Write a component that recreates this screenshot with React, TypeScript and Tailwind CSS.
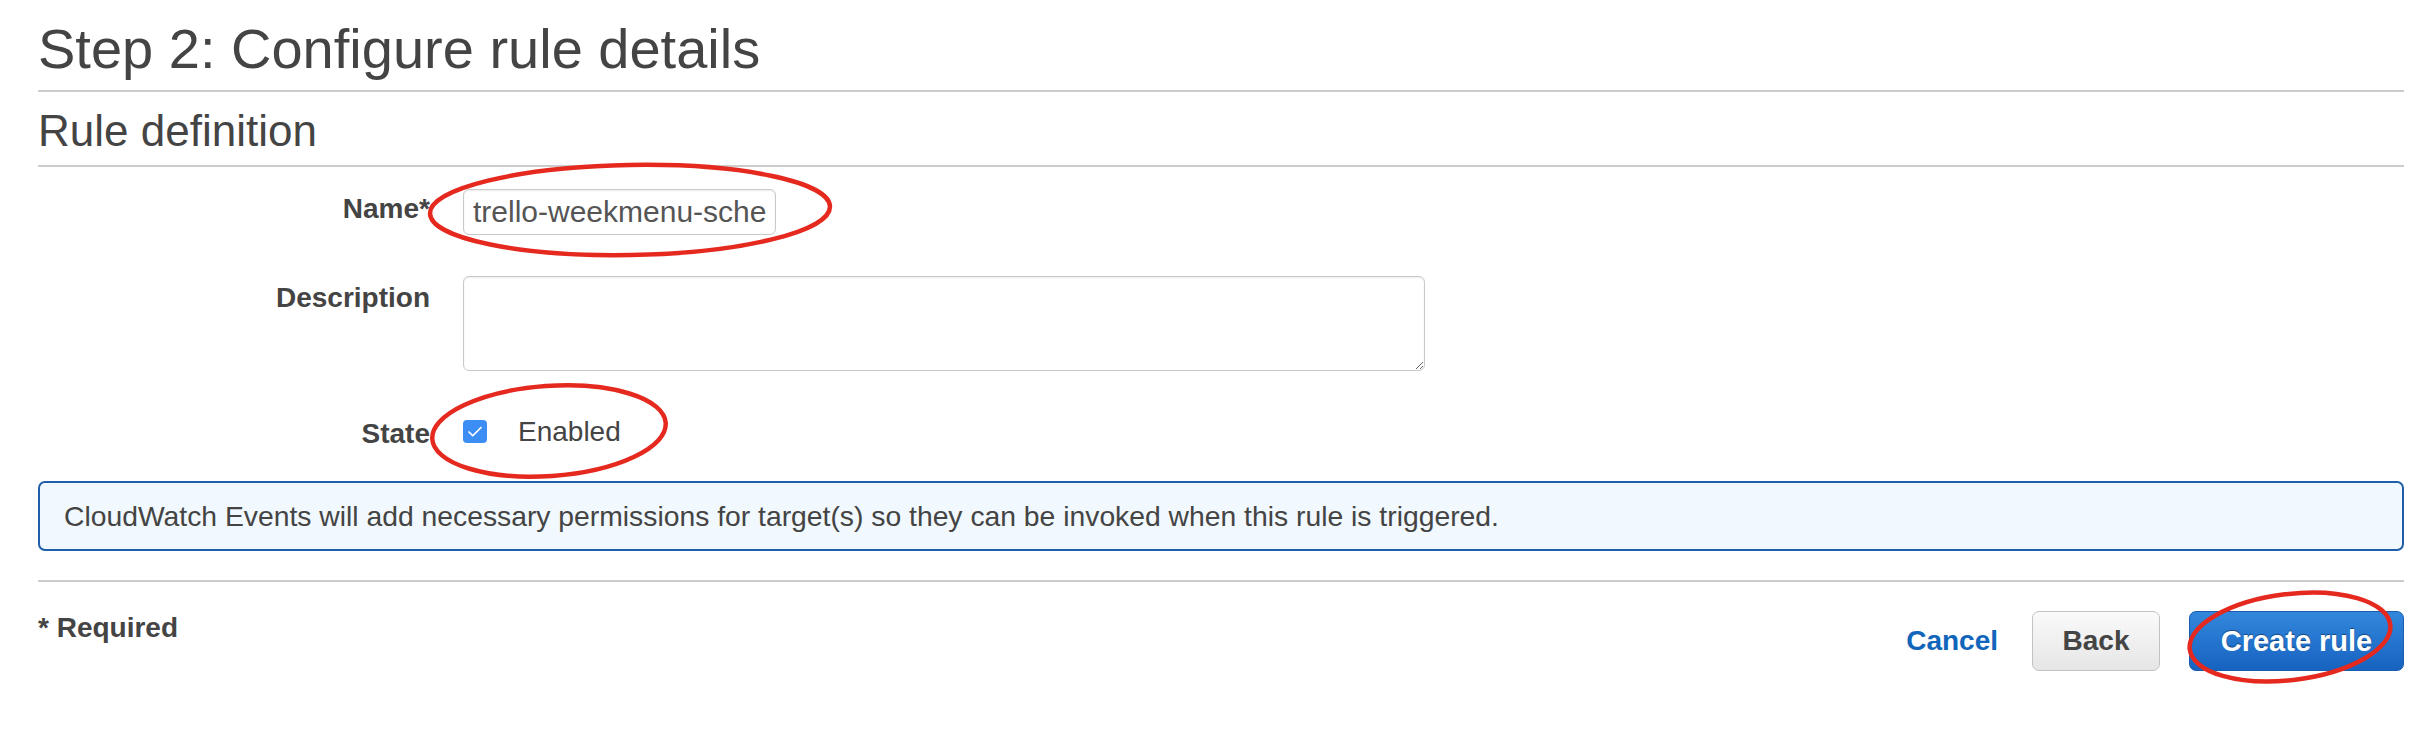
import { Check } from "lucide-react";

function Annotations() {
  // red hand-drawn circles on top of the form
  return (
    <svg
      className="pointer-events-none absolute left-0 top-0"
      width="2428"
      height="734"
      viewBox="0 0 2428 734"
      fill="none"
    >
      <ellipse cx="630" cy="210" rx="200" ry="45" stroke="#e5291f" strokeWidth="4.5" transform="rotate(-1 630 210)" />
      <ellipse cx="549" cy="431" rx="117" ry="45" stroke="#e5291f" strokeWidth="4.5" transform="rotate(-4 549 431)" />
      <ellipse cx="2290" cy="637" rx="101" ry="43" stroke="#e5291f" strokeWidth="4.5" transform="rotate(-7 2290 637)" />
    </svg>
  );
}

function Label({ text, className }: { text: string; className?: string }) {
  return (
    <div className={"w-[392px] shrink-0 text-right text-[28px] font-bold leading-none text-[#444] " + (className ?? "")}>
      {text}
    </div>
  );
}

export default function App() {
  return (
    <div
      className="relative h-[734px] w-full overflow-hidden bg-white pl-[38px] pr-[24px] pt-[21px] text-[#444]"
      style={{ fontFamily: '"Liberation Sans", Arial, sans-serif' }}
    >
      <h1 className="border-b-2 border-[#cccccc] pb-[13px] text-[56px] font-normal leading-none text-[#444]">
        Step 2: Configure rule details
      </h1>
      <h2 className="mt-[17px] border-b-2 border-[#cccccc] pb-[12px] text-[44px] font-normal leading-none text-[#444]">
        Rule definition
      </h2>

      <div className="mt-[22px] flex items-start gap-[33px]">
        <Label text="Name*" className="mt-[6px]" />
        <input
          readOnly
          value="trello-weekmenu-schedule"
          className="h-[46px] w-[313px] rounded-[6px] border border-[#c9c9c9] bg-white pl-[9px] pr-[9px] text-[30px] leading-none text-[#555] shadow-[inset_0_1px_2px_rgba(0,0,0,0.08)] outline-none"
        />
      </div>

      <div className="mt-[41px] flex items-start gap-[33px]">
        <Label text="Description" className="mt-[8px]" />
        <textarea
          readOnly
          className="h-[95px] w-[962px] rounded-[6px] border border-[#c9c9c9] bg-white shadow-[inset_0_1px_2px_rgba(0,0,0,0.08)] outline-none"
        />
      </div>

      <div className="mt-[49px] flex items-start gap-[33px]">
        <Label text="State" />
        <div className="flex items-start gap-[31px]">
          <span className="flex h-[23px] w-[24px] items-center justify-center rounded-[4px] bg-[#3d8ef4]">
            <Check size={18} strokeWidth={2.25} className="text-white" />
          </span>
          <span className="-mt-[2px] text-[28px] leading-none text-[#444]">Enabled</span>
        </div>
      </div>

      <div className="mt-[33px] flex h-[70px] items-center rounded-[7px] border-2 border-[#1f5fa9] bg-[#f1f8fe] px-[24px]">
        <p className="text-[28.3px] leading-none text-[#444]">
          CloudWatch Events will add necessary permissions for target(s) so they can be invoked when this rule is triggered.
        </p>
      </div>

      <div className="mt-[29px] h-[2px] bg-[#cccccc]" />

      <div className="mt-[29px] flex items-start justify-between">
        <div className="mt-[3px] text-[28px] font-bold leading-none text-[#444]">* Required</div>
        <div className="flex items-center">
          <button className="mr-[34px] text-[28px] font-bold leading-none text-[#1166bb]">Cancel</button>
          <button className="h-[60px] w-[128px] rounded-[7px] border border-[#c2c2c2] bg-gradient-to-b from-[#fafafa] to-[#e6e6e6] text-[28px] font-bold leading-none text-[#444]">
            Back
          </button>
          <button className="ml-[29px] h-[60px] w-[215px] rounded-[7px] border border-[#1a5cae] bg-gradient-to-b from-[#3287dc] to-[#1763c0] text-[29px] font-bold leading-none text-white [text-shadow:0_-1px_1px_rgba(0,0,0,0.4)]">
            Create rule
          </button>
        </div>
      </div>

      <Annotations />
    </div>
  );
}
